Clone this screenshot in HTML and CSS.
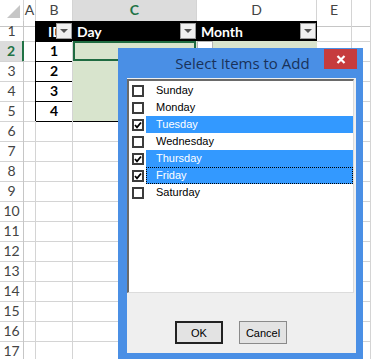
FILE: index.html
```html
<!DOCTYPE html>
<html lang="en">
<head>
    <meta charset="UTF-8">
    <title>Select Items to Add</title>
    <link rel="stylesheet" href="styles.css">
</head>
<body>
    <div class="sheet">
        <div class="row head">
            <div class="corner">
                <svg width="24" height="21" viewBox="0 0 24 21"><polygon points="20,5 20,18 7,18" fill="#c6c6c6"/></svg>
            </div>
            <div>A</div><div>B</div><div class="sel">C</div><div>D</div><div>E</div><div></div>
        </div>
        <div class="row">
            <div class="rh">1</div>
            <div class="edge"></div>
            <div class="th id"><span>ID</span><i class="drop"></i></div>
            <div class="th"><span>Day</span><i class="drop"></i></div>
            <div class="th"><span>Month</span><i class="drop"></i></div>
            <div></div><div></div>
        </div>
        <div class="row">
            <div class="rh sel">2</div>
            <div class="edge"></div>
            <div class="num">1</div>
            <div class="band active"></div>
            <div class="band"><span class="tip"></span></div>
            <div></div><div></div>
        </div>
        <div class="row">
            <div class="rh">3</div>
            <div class="edge"></div>
            <div class="num">2</div>
            <div class="band"></div>
            <div class="band"></div>
            <div></div><div></div>
        </div>
        <div class="row">
            <div class="rh">4</div>
            <div class="edge"></div>
            <div class="num">3</div>
            <div class="band"></div>
            <div class="band"></div>
            <div></div><div></div>
        </div>
        <div class="row">
            <div class="rh">5</div>
            <div class="edge"></div>
            <div class="num">4</div>
            <div class="band"></div>
            <div class="band"></div>
            <div></div><div></div>
        </div>
        <div class="row"><div class="rh">6</div><div></div><div></div><div></div><div></div><div></div><div></div></div>
        <div class="row"><div class="rh">7</div><div></div><div></div><div></div><div></div><div></div><div></div></div>
        <div class="row"><div class="rh">8</div><div></div><div></div><div></div><div></div><div></div><div></div></div>
        <div class="row"><div class="rh">9</div><div></div><div></div><div></div><div></div><div></div><div></div></div>
        <div class="row"><div class="rh">10</div><div></div><div></div><div></div><div></div><div></div><div></div></div>
        <div class="row"><div class="rh">11</div><div></div><div></div><div></div><div></div><div></div><div></div></div>
        <div class="row"><div class="rh">12</div><div></div><div></div><div></div><div></div><div></div><div></div></div>
        <div class="row"><div class="rh">13</div><div></div><div></div><div></div><div></div><div></div><div></div></div>
        <div class="row"><div class="rh">14</div><div></div><div></div><div></div><div></div><div></div><div></div></div>
        <div class="row"><div class="rh">15</div><div></div><div></div><div></div><div></div><div></div><div></div></div>
        <div class="row"><div class="rh">16</div><div></div><div></div><div></div><div></div><div></div><div></div></div>
        <div class="row"><div class="rh">17</div><div></div><div></div><div></div><div></div><div></div><div></div></div>
    </div>

    <div class="dialog">
        <div class="titlebar">
            <span class="title">Select Items to Add</span>
            <div class="close">
                <svg width="10" height="9" viewBox="0 0 10 9"><path d="M1.5 1 L8.5 8 M8.5 1 L1.5 8" stroke="#fff" stroke-width="2.2"/></svg>
            </div>
        </div>
        <div class="client">
            <div class="listbox">
                <div class="item"><span class="check"></span><span class="label">Sunday</span></div>
                <div class="item"><span class="check"></span><span class="label">Monday</span></div>
                <div class="item picked"><span class="check on"></span><span class="label">Tuesday</span></div>
                <div class="item"><span class="check"></span><span class="label">Wednesday</span></div>
                <div class="item picked"><span class="check on"></span><span class="label">Thursday</span></div>
                <div class="item picked focus"><span class="check on"></span><span class="label">Friday</span></div>
                <div class="item"><span class="check"></span><span class="label">Saturday</span></div>
            </div>
            <div class="buttons">
                <div class="btn default">OK</div>
                <div class="btn">Cancel</div>
            </div>
        </div>
    </div>
</body>
</html>
```

FILE: styles.css
```css
body {
    margin: 0;
    overflow: hidden;
    background-color: #fff;
    font-family: Lato, "Liberation Sans", sans-serif;
}
.sheet {
    width: 371px;
}
.row {
    display: grid;
    grid-template-columns: 24px 12px 37px 124px 120px 35px 19px;
    height: 20px;
}
.row > div {
    box-sizing: border-box;
    border-right: 1px solid #d4d4d4;
    border-bottom: 1px solid #d4d4d4;
    position: relative;
}
.head {
    height: 21px;
}
.head > div {
    font-size: 14px;
    color: #444;
    text-align: center;
    line-height: 20px;
    border-bottom-color: #c6c6c6;
}
.head > div.sel {
    background-color: #dcdcdc;
    color: #217346;
    font-weight: bold;
    border-bottom: 2px solid #217346;
}
.row > .rh {
    font-size: 14px;
    color: #444;
    text-align: center;
    line-height: 20px;
    border-right-color: #c6c6c6;
}
.row > .rh.sel {
    background-color: #dcdcdc;
    color: #217346;
    font-weight: bold;
    border-right: 2px solid #217346;
}
.row > .edge {
    border-right-color: #000;
}
.row > .th {
    background-color: #000;
    color: #fff;
    font-weight: bold;
    font-size: 14px;
    display: flex;
    align-items: center;
    padding-left: 4px;
    border-right-color: #000;
    border-bottom-color: #000;
}
.row > .th.id {
    padding-left: 12px;
}
.th span {
    flex: 1;
    overflow: hidden;
    white-space: nowrap;
}
.drop {
    flex-shrink: 0;
    width: 16px;
    height: 16px;
    box-sizing: border-box;
    background-color: #efefef;
    border: 1px solid #9c9c9c;
    display: flex;
    align-items: center;
    justify-content: center;
}
.drop::after {
    content: "";
    border-left: 4px solid transparent;
    border-right: 4px solid transparent;
    border-top: 4px solid #555;
}
.row > .num {
    text-align: center;
    font-weight: bold;
    font-size: 14px;
    line-height: 19px;
    border-bottom-color: #000;
}
.row > .band {
    background-color: #d8e4cd;
    border-right-color: #d8e4cd;
    border-bottom-color: #000;
}
.row > .active {
    box-shadow: inset 0 0 0 2px #1f6b41;
}
.tip {
    position: absolute;
    left: 0;
    top: 0;
    width: 16px;
    height: 14px;
    box-sizing: border-box;
    background-color: #fff;
    border: 1px solid #b5b5b5;
}

/* dialog */
.dialog {
    position: absolute;
    left: 118px;
    top: 48px;
    width: 245px;
    height: 311px;
    box-sizing: border-box;
    padding: 0 7px 6px 9px;
    background-color: #4a8fe5;
    display: flex;
    flex-direction: column;
    font-family: "Liberation Sans", Arial, sans-serif;
}
.titlebar {
    height: 30px;
    display: flex;
    align-items: center;
    justify-content: center;
}
.title {
    font-family: "Open Sans", sans-serif;
    font-size: 15px;
    color: #19325a;
    margin-left: 2px;
}
.close {
    position: absolute;
    right: 6px;
    top: 1px;
    width: 33px;
    height: 20px;
    background-color: #c63c3d;
    display: flex;
    align-items: center;
    justify-content: center;
}
.client {
    flex: 1;
    background-color: #efefef;
    padding: 1px 2px 0 0;
}
.listbox {
    height: 214px;
    box-sizing: border-box;
    background-color: #fff;
    border-style: solid;
    border-width: 2px 1px 1px 2px;
    border-color: #6a6a6a #dcdcdc #dcdcdc #6a6a6a;
    padding-top: 1px;
}
.item {
    display: flex;
    align-items: center;
    height: 17px;
    font-size: 11px;
    color: #000;
}
.check {
    width: 12px;
    height: 12px;
    box-sizing: border-box;
    margin-left: 3px;
    border: 2px solid #3c3c3c;
    background-color: #fff;
    flex-shrink: 0;
}
.check.on {
    background-image: url("data:image/svg+xml,%3Csvg xmlns='http://www.w3.org/2000/svg' width='8' height='8' viewBox='0 0 8 8'%3E%3Cpath d='M1 4 L3 6.3 L7 1.5' fill='none' stroke='%23000' stroke-width='1.8'/%3E%3C/svg%3E");
    background-repeat: no-repeat;
    background-position: center;
}
.label {
    flex: 1;
    height: 17px;
    line-height: 17px;
    margin-left: 2px;
    padding-left: 10px;
    box-sizing: border-box;
}
.picked .label {
    background-color: #3399ff;
    color: #fff;
}
.focus .label {
    outline: 1px dotted #000;
    outline-offset: -1px;
}
.buttons {
    display: flex;
    gap: 16px;
    margin-top: 28px;
    padding-left: 48px;
}
.btn {
    width: 48px;
    height: 23px;
    box-sizing: border-box;
    border: 1px solid #8a8a8a;
    background-color: #e3e3e3;
    font-size: 11px;
    display: flex;
    align-items: center;
    justify-content: center;
}
.btn.default {
    border: 2px solid #222;
}
```
